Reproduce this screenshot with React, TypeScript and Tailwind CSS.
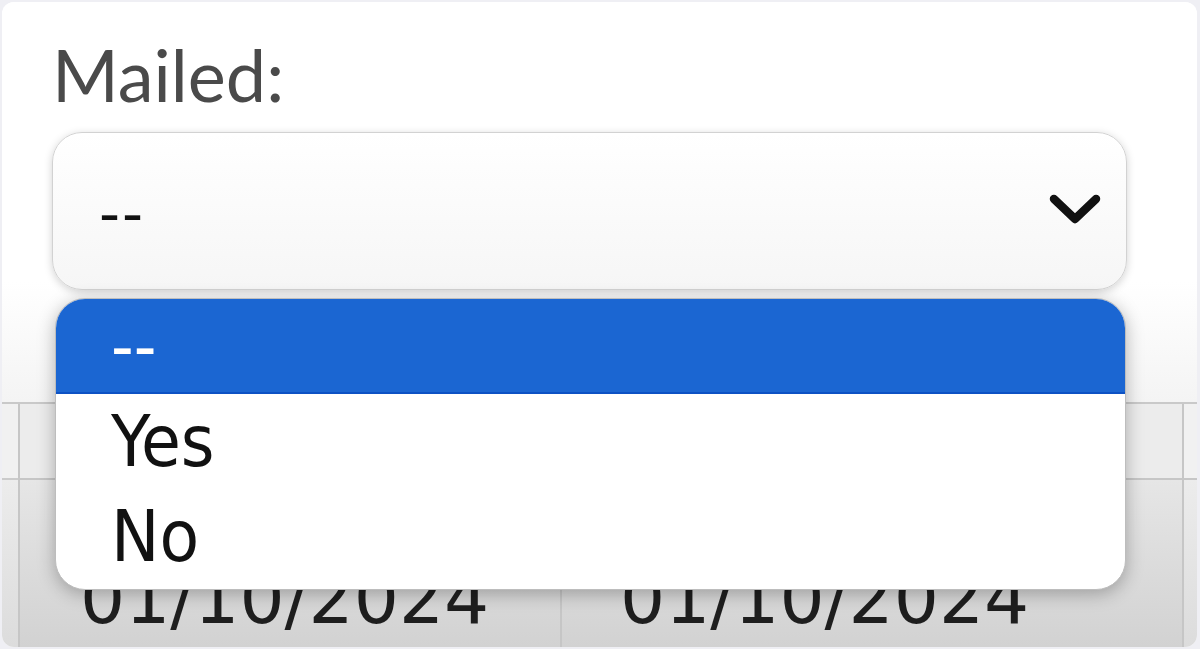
import React from "react";

const lato = { fontFamily: "Lato, 'Noto Sans', sans-serif" };
const tahoma = { fontFamily: "'DejaVu Sans Condensed', 'Noto Sans', sans-serif" };
const verdana = { fontFamily: "'DejaVu Sans', Verdana, sans-serif" };

export default function App() {
  return (
    <div className="w-[1200px] h-[649px] bg-[#efeff4] p-[2px] overflow-hidden">
      <div className="relative w-[1195px] h-[645px] bg-white rounded-[12px] overflow-hidden flex flex-col">
        {/* form section */}
        <div className="h-[400px] shrink-0 pt-[29px] pl-[50px] pr-[70px] bg-gradient-to-b from-white from-70% to-[#f4f4f4]">
          <div className="text-[72px] leading-[86px] text-[#4a4a4a]" style={lato}>
            Mailed:
          </div>
          <div className="mt-[15px] h-[158px] rounded-[30px] border-[1.5px] border-[#d2d2d2] bg-gradient-to-b from-white to-[#f6f6f6] shadow-[0_2px_8px_rgba(0,0,0,0.18)] flex items-center justify-between pl-[45px] pr-[24px]">
            <span className="text-[62px] leading-none text-[#111] pt-[2px]" style={lato}>
              --
            </span>
            <svg width="54" height="36" viewBox="0 0 54 36" className="mt-[-4px]">
              <polyline
                points="6,8 27,28 48,8"
                fill="none"
                stroke="#111"
                strokeWidth="8.5"
                strokeLinecap="round"
                strokeLinejoin="round"
              />
            </svg>
          </div>
        </div>

        {/* table section */}
        <div className="flex-1 grid grid-cols-[16px_542px_622px_1fr] grid-rows-[76px_1fr] border-t-2 border-[#c9c9c9]">
          <div className="bg-[#f1f1f1] border-b-2 border-[#cbcbcb]" />
          <div className="bg-[#ececec] border-l-2 border-b-2 border-[#c6c6c6]" />
          <div className="bg-[#ececec] border-b-2 border-[#c6c6c6]" />
          <div className="bg-[#f1f1f1] border-l-2 border-b-2 border-[#c6c6c6]" />

          <div className="bg-gradient-to-b from-[#ececec] to-[#dcdcdc]" />
          <div className="border-l-2 border-[#c6c6c6] bg-gradient-to-b from-[#e6e6e6] to-[#d2d2d2] pl-[60px] pt-[78px]">
            <span className="text-[71px] leading-[82px] text-[#1e1e1e] whitespace-nowrap" style={verdana}>
              01/10/2024
            </span>
          </div>
          <div className="border-l-2 border-[#c6c6c6] bg-gradient-to-b from-[#e6e6e6] to-[#d2d2d2] pl-[58px] pt-[78px]">
            <span className="text-[71px] leading-[82px] text-[#1e1e1e] whitespace-nowrap" style={verdana}>
              01/10/2024
            </span>
          </div>
          <div className="border-l-2 border-[#c6c6c6] bg-gradient-to-b from-[#ececec] to-[#dcdcdc]" />
        </div>

        {/* open dropdown list */}
        <div className="absolute left-[53px] top-[296px] w-[1071px] h-[292px] bg-white rounded-[30px] overflow-hidden shadow-[0_4px_18px_rgba(0,0,0,0.28)] border border-[#bdbdbd]">
          <div
            className="h-[95px] bg-[#1b66d2] border-b-2 border-[#0d52c4] text-white text-[70px] leading-[95px] pl-[55px]"
            style={tahoma}
          >
            --
          </div>
          <div className="h-[95px] text-[#111] text-[72px] leading-[95px] pl-[55px]" style={tahoma}>
            Yes
          </div>
          <div className="h-[95px] text-[#111] text-[72px] leading-[95px] pl-[55px]" style={tahoma}>
            No
          </div>
        </div>
      </div>
    </div>
  );
}
